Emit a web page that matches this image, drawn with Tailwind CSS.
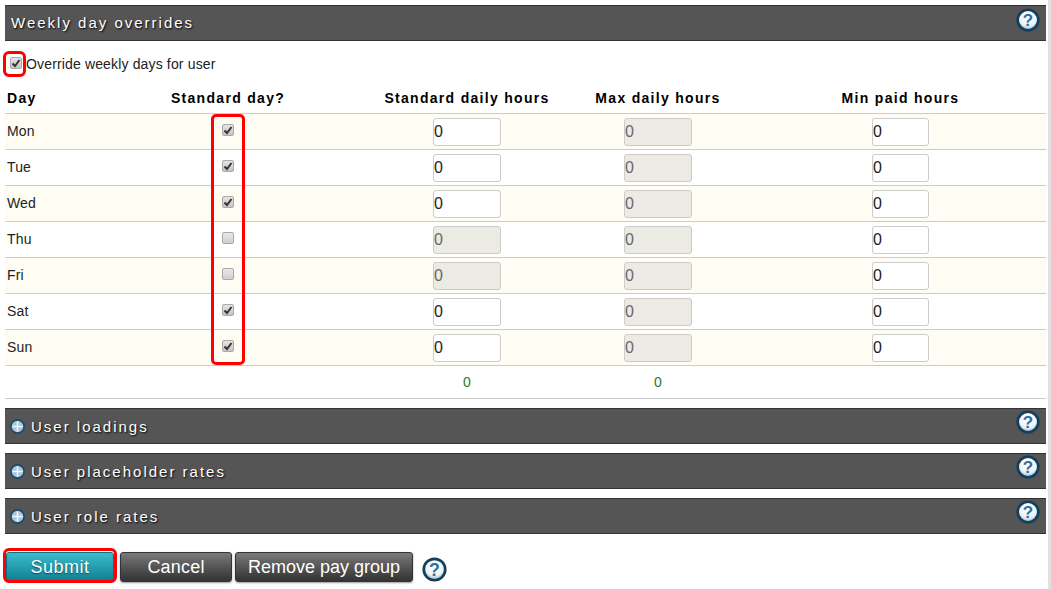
<!DOCTYPE html>
<html lang="en">
<head>
	<meta charset="UTF-8">
	<title>Weekly day overrides</title>
	<script src="https://cdn.jsdelivr.net/npm/@tailwindcss/browser@4"></script>
</head>
<body class="bg-white font-['Liberation_Sans',Arial,sans-serif] text-[14px] tracking-[0.15px] text-[#222]">
<div class="relative w-[1051px] h-[589px] overflow-hidden pt-[5px] pl-[5px]">

	<!-- Weekly day overrides -->
	<div class="w-[1041px]">
		<div class="flex items-center justify-between h-[36px] bg-[#555] border-y border-[#333] pl-[6px] pr-[6px]">
			<span class="pt-px text-[15px] tracking-[2px] text-white [text-shadow:1px_1px_2px_#000]">Weekly day overrides</span>
			<svg class="w-[24px] h-[24px] -mt-[7px]" viewBox="0 0 24 24"><defs><radialGradient id="h1" cx="50%" cy="35%" r="65%"><stop offset="0" stop-color="#fff"/><stop offset="0.65" stop-color="#eef3f7"/><stop offset="1" stop-color="#8fb0c8"/></radialGradient></defs><circle cx="12" cy="12" r="10.3" fill="url(#h1)" stroke="#123f5c" stroke-width="2.6"/><text x="12" y="18" text-anchor="middle" font-size="17" font-weight="700" fill="#2f6da0" font-family="Liberation Sans">?</text></svg>
		</div>

		<label class="flex items-center h-[46px] pl-[5px]">
			<span class="flex items-center justify-center w-[12px] h-[12px] mr-[4px] -mt-[2px] rounded-[2px] border border-[#aaa] bg-gradient-to-b from-[#e4e4e4] to-[#c4c4c4]">
				<svg class="w-[10px] h-[10px]" viewBox="0 0 10 10"><path d="M1.5 5.5 L4 8 L8.5 2" fill="none" stroke="#333" stroke-width="2"/></svg>
			</span>
			<span>Override weekly days for user</span>
		</label>

		<div class="grid grid-cols-[78px_290px_188px_194px_291px] items-center h-[27px] pb-[3px] border-b border-[#ccc] font-bold tracking-[1.3px] text-black text-[14px]">
			<span class="pl-[2px]">Day</span>
			<span class="text-center">Standard day?</span>
			<span class="text-center">Standard daily hours</span>
			<span class="text-center">Max daily hours</span>
			<span class="text-center">Min paid hours</span>
		</div>

		<!-- Mon -->
		<div class="grid grid-cols-[78px_290px_188px_194px_291px] items-center h-[36px] border-b border-[#ccc] bg-[#fffdf3]">
			<span class="pl-[2px]">Mon</span>
			<div class="flex justify-center mb-[3px]"><span class="flex items-center justify-center w-[12px] h-[12px] rounded-[2px] border border-[#aaa] bg-gradient-to-b from-[#e4e4e4] to-[#c4c4c4]"><svg class="w-[10px] h-[10px]" viewBox="0 0 10 10"><path d="M1.5 5.5 L4 8 L8.5 2" fill="none" stroke="#333" stroke-width="2"/></svg></span></div>
			<div class="flex justify-center"><input value="0" class="w-[68px] h-[28px] px-0 rounded-[3px] border border-[#ccc] bg-white text-[16px] text-[#222]"></div>
			<div class="flex justify-center"><input disabled value="0" class="w-[68px] h-[28px] px-0 rounded-[3px] border border-[#ccc] bg-[#ebebe4] text-[16px] text-[#666]"></div>
			<div class="flex justify-center"><input value="0" class="w-[57px] h-[28px] px-0 rounded-[3px] border border-[#ccc] bg-white text-[16px] text-[#222]"></div>
		</div>
		<!-- Tue -->
		<div class="grid grid-cols-[78px_290px_188px_194px_291px] items-center h-[36px] border-b border-[#ccc] bg-white">
			<span class="pl-[2px]">Tue</span>
			<div class="flex justify-center mb-[3px]"><span class="flex items-center justify-center w-[12px] h-[12px] rounded-[2px] border border-[#aaa] bg-gradient-to-b from-[#e4e4e4] to-[#c4c4c4]"><svg class="w-[10px] h-[10px]" viewBox="0 0 10 10"><path d="M1.5 5.5 L4 8 L8.5 2" fill="none" stroke="#333" stroke-width="2"/></svg></span></div>
			<div class="flex justify-center"><input value="0" class="w-[68px] h-[28px] px-0 rounded-[3px] border border-[#ccc] bg-white text-[16px] text-[#222]"></div>
			<div class="flex justify-center"><input disabled value="0" class="w-[68px] h-[28px] px-0 rounded-[3px] border border-[#ccc] bg-[#ebebe4] text-[16px] text-[#666]"></div>
			<div class="flex justify-center"><input value="0" class="w-[57px] h-[28px] px-0 rounded-[3px] border border-[#ccc] bg-white text-[16px] text-[#222]"></div>
		</div>
		<!-- Wed -->
		<div class="grid grid-cols-[78px_290px_188px_194px_291px] items-center h-[36px] border-b border-[#ccc] bg-[#fffdf3]">
			<span class="pl-[2px]">Wed</span>
			<div class="flex justify-center mb-[3px]"><span class="flex items-center justify-center w-[12px] h-[12px] rounded-[2px] border border-[#aaa] bg-gradient-to-b from-[#e4e4e4] to-[#c4c4c4]"><svg class="w-[10px] h-[10px]" viewBox="0 0 10 10"><path d="M1.5 5.5 L4 8 L8.5 2" fill="none" stroke="#333" stroke-width="2"/></svg></span></div>
			<div class="flex justify-center"><input value="0" class="w-[68px] h-[28px] px-0 rounded-[3px] border border-[#ccc] bg-white text-[16px] text-[#222]"></div>
			<div class="flex justify-center"><input disabled value="0" class="w-[68px] h-[28px] px-0 rounded-[3px] border border-[#ccc] bg-[#ebebe4] text-[16px] text-[#666]"></div>
			<div class="flex justify-center"><input value="0" class="w-[57px] h-[28px] px-0 rounded-[3px] border border-[#ccc] bg-white text-[16px] text-[#222]"></div>
		</div>
		<!-- Thu -->
		<div class="grid grid-cols-[78px_290px_188px_194px_291px] items-center h-[36px] border-b border-[#ccc] bg-white">
			<span class="pl-[2px]">Thu</span>
			<div class="flex justify-center mb-[3px]"><span class="w-[12px] h-[12px] rounded-[2px] border border-[#aaa] bg-gradient-to-b from-[#e8e8e8] to-[#cfcfcf]"></span></div>
			<div class="flex justify-center"><input disabled value="0" class="w-[68px] h-[28px] px-0 rounded-[3px] border border-[#ccc] bg-[#ebebe4] text-[16px] text-[#666]"></div>
			<div class="flex justify-center"><input disabled value="0" class="w-[68px] h-[28px] px-0 rounded-[3px] border border-[#ccc] bg-[#ebebe4] text-[16px] text-[#666]"></div>
			<div class="flex justify-center"><input value="0" class="w-[57px] h-[28px] px-0 rounded-[3px] border border-[#ccc] bg-white text-[16px] text-[#222]"></div>
		</div>
		<!-- Fri -->
		<div class="grid grid-cols-[78px_290px_188px_194px_291px] items-center h-[36px] border-b border-[#ccc] bg-[#fffdf3]">
			<span class="pl-[2px]">Fri</span>
			<div class="flex justify-center mb-[3px]"><span class="w-[12px] h-[12px] rounded-[2px] border border-[#aaa] bg-gradient-to-b from-[#e8e8e8] to-[#cfcfcf]"></span></div>
			<div class="flex justify-center"><input disabled value="0" class="w-[68px] h-[28px] px-0 rounded-[3px] border border-[#ccc] bg-[#ebebe4] text-[16px] text-[#666]"></div>
			<div class="flex justify-center"><input disabled value="0" class="w-[68px] h-[28px] px-0 rounded-[3px] border border-[#ccc] bg-[#ebebe4] text-[16px] text-[#666]"></div>
			<div class="flex justify-center"><input value="0" class="w-[57px] h-[28px] px-0 rounded-[3px] border border-[#ccc] bg-white text-[16px] text-[#222]"></div>
		</div>
		<!-- Sat -->
		<div class="grid grid-cols-[78px_290px_188px_194px_291px] items-center h-[36px] border-b border-[#ccc] bg-white">
			<span class="pl-[2px]">Sat</span>
			<div class="flex justify-center mb-[3px]"><span class="flex items-center justify-center w-[12px] h-[12px] rounded-[2px] border border-[#aaa] bg-gradient-to-b from-[#e4e4e4] to-[#c4c4c4]"><svg class="w-[10px] h-[10px]" viewBox="0 0 10 10"><path d="M1.5 5.5 L4 8 L8.5 2" fill="none" stroke="#333" stroke-width="2"/></svg></span></div>
			<div class="flex justify-center"><input value="0" class="w-[68px] h-[28px] px-0 rounded-[3px] border border-[#ccc] bg-white text-[16px] text-[#222]"></div>
			<div class="flex justify-center"><input disabled value="0" class="w-[68px] h-[28px] px-0 rounded-[3px] border border-[#ccc] bg-[#ebebe4] text-[16px] text-[#666]"></div>
			<div class="flex justify-center"><input value="0" class="w-[57px] h-[28px] px-0 rounded-[3px] border border-[#ccc] bg-white text-[16px] text-[#222]"></div>
		</div>
		<!-- Sun -->
		<div class="grid grid-cols-[78px_290px_188px_194px_291px] items-center h-[36px] border-b border-[#ccc] bg-[#fffdf3]">
			<span class="pl-[2px]">Sun</span>
			<div class="flex justify-center mb-[3px]"><span class="flex items-center justify-center w-[12px] h-[12px] rounded-[2px] border border-[#aaa] bg-gradient-to-b from-[#e4e4e4] to-[#c4c4c4]"><svg class="w-[10px] h-[10px]" viewBox="0 0 10 10"><path d="M1.5 5.5 L4 8 L8.5 2" fill="none" stroke="#333" stroke-width="2"/></svg></span></div>
			<div class="flex justify-center"><input value="0" class="w-[68px] h-[28px] px-0 rounded-[3px] border border-[#ccc] bg-white text-[16px] text-[#222]"></div>
			<div class="flex justify-center"><input disabled value="0" class="w-[68px] h-[28px] px-0 rounded-[3px] border border-[#ccc] bg-[#ebebe4] text-[16px] text-[#666]"></div>
			<div class="flex justify-center"><input value="0" class="w-[57px] h-[28px] px-0 rounded-[3px] border border-[#ccc] bg-white text-[16px] text-[#222]"></div>
		</div>
		<!-- totals -->
		<div class="grid grid-cols-[78px_290px_188px_194px_291px] items-center h-[33px] pt-px border-b border-[#ccc] text-[14px] text-[#2c7a2c]">
			<span></span><span></span>
			<span class="text-center">0</span>
			<span class="text-center">0</span>
			<span></span>
		</div>
	</div>

	<!-- Collapsed sections -->
	<div class="w-[1041px] mt-[9px] flex flex-col gap-[9px]">
		<div class="flex items-center justify-between h-[36px] bg-[#555] border-y border-[#333] pl-[5px] pr-[6px]">
			<div class="flex items-center gap-[6px]">
				<svg class="w-[15px] h-[15px]" viewBox="0 0 15 15"><circle cx="7.5" cy="7.5" r="6.6" fill="#a9c6dc" stroke="#1c4a68" stroke-width="1.6"/><path d="M7.5 2.5V12.5M2.5 7.5H12.5" stroke="#f4f8fb" stroke-width="1.5"/></svg>
				<span class="pt-[2px] text-[15px] tracking-[2px] text-white [text-shadow:1px_1px_2px_#000]">User loadings</span>
			</div>
			<svg class="w-[24px] h-[24px] -mt-[8px]" viewBox="0 0 24 24"><defs><radialGradient id="h2" cx="50%" cy="35%" r="65%"><stop offset="0" stop-color="#fff"/><stop offset="0.65" stop-color="#eef3f7"/><stop offset="1" stop-color="#8fb0c8"/></radialGradient></defs><circle cx="12" cy="12" r="10.3" fill="url(#h2)" stroke="#123f5c" stroke-width="2.6"/><text x="12" y="18" text-anchor="middle" font-size="17" font-weight="700" fill="#2f6da0" font-family="Liberation Sans">?</text></svg>
		</div>
		<div class="flex items-center justify-between h-[36px] bg-[#555] border-y border-[#333] pl-[5px] pr-[6px]">
			<div class="flex items-center gap-[6px]">
				<svg class="w-[15px] h-[15px]" viewBox="0 0 15 15"><circle cx="7.5" cy="7.5" r="6.6" fill="#a9c6dc" stroke="#1c4a68" stroke-width="1.6"/><path d="M7.5 2.5V12.5M2.5 7.5H12.5" stroke="#f4f8fb" stroke-width="1.5"/></svg>
				<span class="pt-[2px] text-[15px] tracking-[2px] text-white [text-shadow:1px_1px_2px_#000]">User placeholder rates</span>
			</div>
			<svg class="w-[24px] h-[24px] -mt-[8px]" viewBox="0 0 24 24"><defs><radialGradient id="h3" cx="50%" cy="35%" r="65%"><stop offset="0" stop-color="#fff"/><stop offset="0.65" stop-color="#eef3f7"/><stop offset="1" stop-color="#8fb0c8"/></radialGradient></defs><circle cx="12" cy="12" r="10.3" fill="url(#h3)" stroke="#123f5c" stroke-width="2.6"/><text x="12" y="18" text-anchor="middle" font-size="17" font-weight="700" fill="#2f6da0" font-family="Liberation Sans">?</text></svg>
		</div>
		<div class="flex items-center justify-between h-[36px] bg-[#555] border-y border-[#333] pl-[5px] pr-[6px]">
			<div class="flex items-center gap-[6px]">
				<svg class="w-[15px] h-[15px]" viewBox="0 0 15 15"><circle cx="7.5" cy="7.5" r="6.6" fill="#a9c6dc" stroke="#1c4a68" stroke-width="1.6"/><path d="M7.5 2.5V12.5M2.5 7.5H12.5" stroke="#f4f8fb" stroke-width="1.5"/></svg>
				<span class="pt-[2px] text-[15px] tracking-[2px] text-white [text-shadow:1px_1px_2px_#000]">User role rates</span>
			</div>
			<svg class="w-[24px] h-[24px] -mt-[8px]" viewBox="0 0 24 24"><defs><radialGradient id="h4" cx="50%" cy="35%" r="65%"><stop offset="0" stop-color="#fff"/><stop offset="0.65" stop-color="#eef3f7"/><stop offset="1" stop-color="#8fb0c8"/></radialGradient></defs><circle cx="12" cy="12" r="10.3" fill="url(#h4)" stroke="#123f5c" stroke-width="2.6"/><text x="12" y="18" text-anchor="middle" font-size="17" font-weight="700" fill="#2f6da0" font-family="Liberation Sans">?</text></svg>
		</div>
	</div>

	<!-- Buttons -->
	<div class="flex items-center mt-[17px] pl-px">
		<button class="w-[108px] h-[30px] pt-px rounded-[3px] border border-[#0d6f80] bg-gradient-to-b from-[#3bbccb] to-[#0b7f92] text-[18px] tracking-[0.5px] text-white [text-shadow:0_1px_1px_#0a4a55]">Submit</button>
		<button class="w-[112px] h-[30px] pt-px ml-[6px] rounded-[3px] border border-[#333] bg-gradient-to-b from-[#7a7a7a] to-[#333] text-[18px] tracking-[0.2px] text-white shadow-[0_1px_2px_#999]">Cancel</button>
		<button class="w-[178px] h-[30px] pt-px ml-[3px] rounded-[3px] border border-[#333] bg-gradient-to-b from-[#7a7a7a] to-[#333] text-[18px] tracking-normal text-white shadow-[0_1px_2px_#999]">Remove pay group</button>
		<svg class="w-[25px] h-[25px] ml-[9px] mt-[6px]" viewBox="0 0 24 24"><defs><radialGradient id="h5" cx="50%" cy="35%" r="65%"><stop offset="0" stop-color="#fff"/><stop offset="0.65" stop-color="#eef3f7"/><stop offset="1" stop-color="#8fb0c8"/></radialGradient></defs><circle cx="12" cy="12" r="10.3" fill="url(#h5)" stroke="#123f5c" stroke-width="2.6"/><text x="12" y="18" text-anchor="middle" font-size="17" font-weight="700" fill="#2f6da0" font-family="Liberation Sans">?</text></svg>
	</div>

	<!-- Red highlight boxes drawn over the form -->
	<div class="absolute left-[3px] top-[51px] w-[23px] h-[26px] rounded-[6px] border-[3px] border-[#f00]"></div>
	<div class="absolute left-[211px] top-[114px] w-[34px] h-[251px] rounded-[5px] border-[3px] border-[#f00]"></div>
	<div class="absolute left-[3px] top-[548px] w-[114px] h-[35px] rounded-[6px] border-[3px] border-[#f00]"></div>

	<!-- Scrollbar edge -->
	<div class="absolute right-0 top-0 w-[3px] h-full bg-[#e2e2e2]"></div>
</div>
</body>
</html>
